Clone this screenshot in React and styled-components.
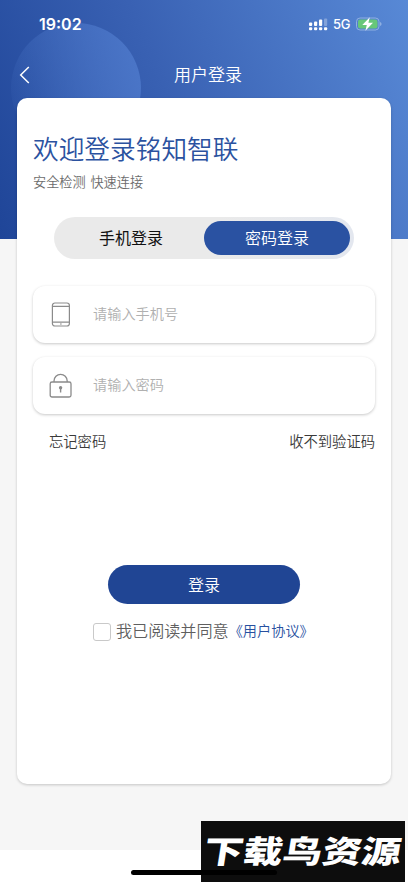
import React, { useState } from "react";
import styled, { createGlobalStyle } from "styled-components";

const GlobalStyle = createGlobalStyle`
  * {
    box-sizing: border-box;
  }

  body {
    margin: 0;
    background: #fff;
    font-family: "Liberation Sans", "Noto Sans CJK SC", sans-serif;
  }

  button,
  input {
    font-family: inherit;
  }
`;

const Screen = styled.div`
  position: relative;
  height: 883px;
  overflow: hidden;
  background: linear-gradient(#f6f6f6, #f6f6f6) 0 0 / 100% 850px no-repeat #fff;
`;

const Backdrop = styled.div`
  position: absolute;
  top: 0;
  left: 0;
  width: 100%;
  height: 239px;
  overflow: hidden;
  background: linear-gradient(67deg, #1f4598 0%, #3961b3 45%, #5889d6 100%);

  &::before {
    content: "";
    position: absolute;
    top: 23px;
    left: 11px;
    width: 130px;
    height: 130px;
    border-radius: 50%;
    background: linear-gradient(75deg, rgba(75, 118, 200, 0) 0%, #4b76c8 95%);
  }
`;

const Page = styled.div`
  position: relative;
  display: flex;
  flex-direction: column;
`;

const StatusBar = styled.div`
  display: flex;
  align-items: center;
  justify-content: space-between;
  height: 48px;
  padding: 0 26px 0 39px;
  color: #fff;
  font-family: Inter, sans-serif;
`;

const Time = styled.span`
  font-size: 16px;
  font-weight: 600;
`;

const StatusIcons = styled.div`
  display: flex;
  align-items: center;
  gap: 5px;
`;

const Network = styled.span`
  width: 18px;
  font-size: 13px;
  font-weight: 500;
  letter-spacing: -0.3px;
`;

const NavBar = styled.div`
  display: grid;
  grid-template-columns: 50px 1fr 42px;
  align-items: center;
  height: 50px;
`;

const BackButton = styled.button`
  display: flex;
  padding: 4px 0 0 19px;
  border: 0;
  background: transparent;
`;

const NavTitle = styled.h1`
  margin: 6px 0 0;
  color: #fff;
  font-size: 17px;
  font-weight: 350;
  line-height: 24px;
  text-align: center;
`;

const Card = styled.main`
  display: flex;
  flex-direction: column;
  height: 686px;
  margin: 0 17px;
  padding: 33px 16px 0;
  border-radius: 10px;
  background: #fff;
  box-shadow: 0 1px 3px rgba(0, 0, 0, 0.2);
`;

const Welcome = styled.h2`
  margin: 0;
  color: #2b529f;
  font-size: 25.7px;
  font-weight: 350;
  line-height: 38px;
`;

const Slogan = styled.p`
  margin: 4px 0 0;
  color: #6c6c6c;
  font-size: 13.2px;
  font-weight: 350;
  line-height: 20px;
  word-spacing: 1px;
`;

const Tabs = styled.div`
  display: flex;
  width: 300px;
  height: 42px;
  margin: 24px 0 0 21px;
  padding: 4px;
  border-radius: 21px;
  background: linear-gradient(90deg, #eaeaea 55%, #e3e7ef);
`;

const Tab = styled.button`
  flex: 1;
  padding: 0 0 2px;
  border: 0;
  border-radius: 17px;
  background: ${(props) => (props.$active ? "#2a52a2" : "transparent")};
  color: ${(props) => (props.$active ? "#fff" : "#111")};
  font-size: 16px;
  font-weight: ${(props) => (props.$active ? 350 : 400)};
`;

const Fields = styled.div`
  display: flex;
  flex-direction: column;
  gap: 14px;
  margin-top: 27px;
`;

const Field = styled.label`
  display: flex;
  align-items: center;
  height: 57px;
  padding-left: 15px;
  border-radius: 12px;
  background: #fff;
  box-shadow: 0 1px 3px rgba(0, 0, 0, 0.22);
`;

const Input = styled.input`
  flex: 1;
  min-width: 0;
  margin-left: 20px;
  padding: 0 0 1px;
  border: 0;
  outline: 0;
  background: transparent;
  font-size: 14.2px;
  font-weight: 350;

  &::placeholder {
    color: #b0b0b0;
  }
`;

const Links = styled.div`
  display: flex;
  justify-content: space-between;
  margin-top: 18px;
  padding-left: 16px;
  color: #3a3a3a;
  font-size: 14.3px;
  font-weight: 350;
  line-height: 21px;
`;

const LoginButton = styled.button`
  align-self: center;
  width: 192px;
  height: 39px;
  margin-top: 112px;
  padding: 0 0 1px;
  border: 0;
  border-radius: 20px;
  background: #204594;
  color: #fff;
  font-size: 16px;
  font-weight: 350;
`;

const Agreement = styled.div`
  display: flex;
  align-items: center;
  height: 24px;
  margin: 16px 0 0 60px;
  color: #5f5f5f;
  font-size: 16.1px;
  font-weight: 350;
  line-height: 24px;
  white-space: nowrap;
`;

const Checkbox = styled.input`
  appearance: none;
  flex: none;
  width: 18px;
  height: 18px;
  margin: 0 5px 0 0;
  border: 1px solid #c9c9c9;
  border-radius: 3px;
  background: #fff;

  &:checked {
    background: #204594;
  }
`;

const AgreementText = styled.span`
  margin-top: -2px;
`;

const Terms = styled(AgreementText)`
  color: #27509f;
  font-size: 14.2px;
`;

const Watermark = styled.div`
  position: absolute;
  top: 821px;
  left: 201px;
  display: flex;
  align-items: center;
  justify-content: center;
  width: 204px;
  height: 61px;
  padding-bottom: 4px;
  background: #0d0d0d;
  color: #fff;
  font-family: "Noto Sans CJK SC", sans-serif;
  font-size: 34px;
  font-weight: 900;
  line-height: 1;
  white-space: nowrap;
`;

const WatermarkText = styled.span`
  transform: skewX(-9deg) scale(1.16, 0.92);
`;

const HomeIndicator = styled.div`
  position: absolute;
  top: 870px;
  left: 131px;
  width: 146px;
  height: 5px;
  border-radius: 3px;
  background: #000;
`;

const SignalIcon = () => (
  <svg width="19" height="13" viewBox="0 0 19 13" fill="#fff">
    <rect x="0" y="4.5" width="3.2" height="3.5" rx="1" />
    <rect x="5" y="3.5" width="3.2" height="4.5" rx="1" />
    <rect x="10" y="1.5" width="3.2" height="6.5" rx="1" />
    <rect x="15" y="0.5" width="3.2" height="7.5" rx="1" opacity="0.3" />
    <rect x="0" y="9.3" width="3.2" height="3" rx="1" />
    <rect x="5" y="9.3" width="3.2" height="3" rx="1" />
    <rect x="10" y="9.3" width="3.2" height="3" rx="1" />
    <rect x="15" y="9.3" width="3.2" height="3" rx="1" />
  </svg>
);

const BatteryIcon = () => (
  <svg width="26" height="14" viewBox="0 0 26 14">
    <rect x="0.5" y="1" width="22.5" height="12" rx="3.6" fill="none" stroke="#a9c3e8" strokeOpacity="0.7" />
    <rect x="2" y="2.5" width="19.5" height="9" rx="2.3" fill="#67c779" />
    <path d="M24.3 5v4c1.5-.7 1.5-3.3 0-4z" fill="#a9c3e8" />
    <path d="M13.8 0.3 6.3 8h4.5l-1.4 5.7 7.6-7.9h-4.6z" fill="#fff" />
  </svg>
);

const BackIcon = () => (
  <svg width="11" height="18" viewBox="0 0 11 18" fill="none" stroke="#fff" strokeWidth="1.5">
    <path d="M9.8 1 1.7 9l8.1 8" />
  </svg>
);

const PhoneIcon = () => (
  <svg width="25" height="28" viewBox="0 0 25 28" fill="none" stroke="#8b8b8b" strokeWidth="1.2">
    <rect x="4.4" y="2" width="17" height="23" rx="2.5" />
    <path d="M4.4 5.3h17M4.4 21.1h17" />
    <circle cx="12.9" cy="23" r="0.8" fill="#8b8b8b" stroke="none" />
  </svg>
);

const LockIcon = () => (
  <svg width="25" height="28" viewBox="0 0 25 28" fill="none" stroke="#8b8b8b" strokeWidth="1.3">
    <rect x="2.2" y="10" width="20.8" height="15" rx="1.8" />
    <path d="M6 10V8.9a6.6 6.6 0 0 1 13.2 0V10" />
    <circle cx="12.6" cy="15.7" r="1.7" fill="#8b8b8b" stroke="none" />
    <path d="M12.6 16v4.5" strokeWidth="1.4" />
  </svg>
);

function App() {
  const [tab, setTab] = useState("password");
  const [phone, setPhone] = useState("");
  const [password, setPassword] = useState("");
  const [agreed, setAgreed] = useState(false);

  return (
    <Screen>
      <GlobalStyle />
      <Backdrop />
      <Page>
        <StatusBar>
          <Time>19:02</Time>
          <StatusIcons>
            <SignalIcon />
            <Network>5G</Network>
            <BatteryIcon />
          </StatusIcons>
        </StatusBar>
        <NavBar>
          <BackButton>
            <BackIcon />
          </BackButton>
          <NavTitle>用户登录</NavTitle>
        </NavBar>
        <Card>
          <Welcome>欢迎登录铭知智联</Welcome>
          <Slogan>安全检测 快速连接</Slogan>
          <Tabs>
            <Tab $active={tab === "phone"} onClick={() => setTab("phone")}>
              手机登录
            </Tab>
            <Tab $active={tab === "password"} onClick={() => setTab("password")}>
              密码登录
            </Tab>
          </Tabs>
          <Fields>
            <Field>
              <PhoneIcon />
              <Input
                value={phone}
                onChange={(e) => setPhone(e.target.value)}
                placeholder="请输入手机号"
              />
            </Field>
            <Field>
              <LockIcon />
              <Input
                type="password"
                value={password}
                onChange={(e) => setPassword(e.target.value)}
                placeholder="请输入密码"
              />
            </Field>
          </Fields>
          <Links>
            <span>忘记密码</span>
            <span>收不到验证码</span>
          </Links>
          <LoginButton>登录</LoginButton>
          <Agreement>
            <Checkbox
              type="checkbox"
              checked={agreed}
              onChange={() => setAgreed(!agreed)}
            />
            <AgreementText>我已阅读并同意</AgreementText>
            <Terms>《用户协议》</Terms>
          </Agreement>
        </Card>
      </Page>
      <Watermark>
        <WatermarkText>下载鸟资源</WatermarkText>
      </Watermark>
      <HomeIndicator />
    </Screen>
  );
}

export default App;
